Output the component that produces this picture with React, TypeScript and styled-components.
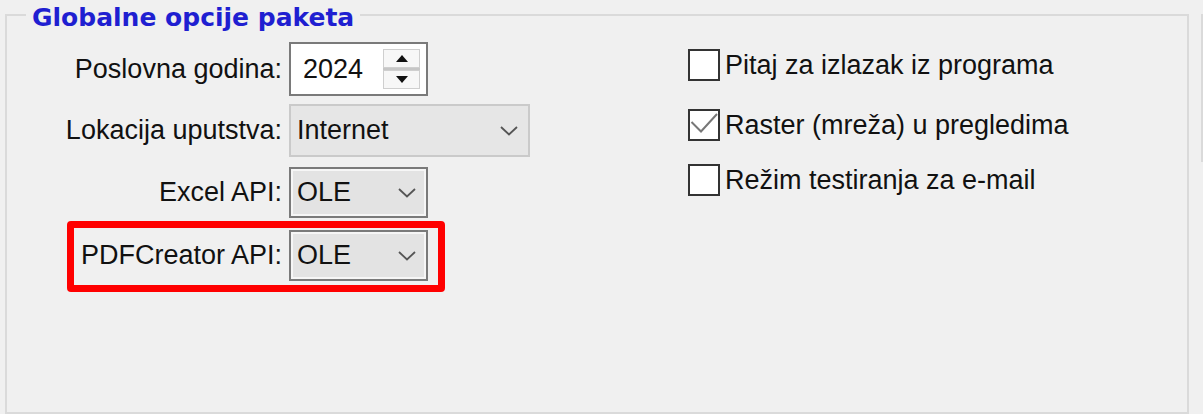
import React from 'react';
import styled, { createGlobalStyle } from 'styled-components';

const GlobalStyle = createGlobalStyle`
  html, body {
    margin: 0;
    padding: 0;
    background: #f0f0f0;
  }
  body {
    font-family: 'Liberation Sans', Arial, sans-serif;
    color: #111;
  }
`;

const Page = styled.div`
  display: flex;
  align-items: flex-start;
  width: 1203px;
  height: 414px;
  overflow: hidden;
  background: #f0f0f0;
`;

const GroupBox = styled.fieldset`
  box-sizing: border-box;
  flex: none;
  width: 1184px;
  height: 414px;
  margin: 0 0 0 5px;
  padding: 0;
  min-width: 0;
  border: 2px solid #dadada;
`;

const Title = styled.legend`
  margin-left: 19px;
  padding: 5px 6px 0;
  line-height: 25px;
  font-family: 'DejaVu Sans', Verdana, sans-serif;
  font-weight: bold;
  font-size: 25px;
  color: #1f1fd1;
`;

const Content = styled.div`
  display: flex;
  padding: 12px 0 0 53px;
`;

const FormColumn = styled.div`
  display: flex;
  flex-direction: column;
  width: 628px;
`;

const Row = styled.div<{ $top?: number }>`
  display: flex;
  align-items: center;
  gap: 7px;
  margin-top: ${({ $top }) => $top || 0}px;
`;

const Label = styled.span`
  width: 222px;
  text-align: right;
  white-space: nowrap;
  font-size: 27px;
`;

const SpinBox = styled.div`
  box-sizing: border-box;
  display: flex;
  align-items: center;
  width: 139px;
  height: 54px;
  padding: 4px 6px 4px 12px;
  background: #fff;
  border: 2px solid #7a7a7a;
  font-size: 27px;
  & > span {
    flex: 1;
  }
`;

const SpinButtons = styled.div`
  display: flex;
  flex-direction: column;
  width: 37px;
  height: 40px;
  gap: 2px;
  background: #c6c6c6;
`;

const SpinButton = styled.div`
  flex: 1;
  display: flex;
  align-items: center;
  justify-content: center;
  background: #f7f7f7;
  box-shadow: inset 0 0 0 1px #cfcfcf;
`;

const Combo = styled.div<{ $width: number; $height: number; $flat?: boolean }>`
  box-sizing: border-box;
  display: flex;
  align-items: center;
  width: ${({ $width }) => $width}px;
  height: ${({ $height }) => $height}px;
  padding: 0 10px 0 6px;
  font-size: 27px;
  background: ${({ $flat }) => ($flat ? '#e6e6e6' : '#e3e3e3')};
  border: 2px solid ${({ $flat }) => ($flat ? '#cacaca' : '#7a7a7a')};
  box-shadow: ${({ $flat }) => ($flat ? 'none' : 'inset 0 0 0 2px #f6f6f6')};
  & > svg {
    margin-left: auto;
  }
`;

const Highlight = styled.div`
  position: relative;
  align-self: flex-start;
  margin-top: 12px;
  &::after {
    content: '';
    position: absolute;
    inset: -9px -17px -11px 7px;
    border: 7px solid #ff0000;
    border-radius: 4px;
    pointer-events: none;
  }
`;

const CheckColumn = styled.div`
  display: flex;
  flex-direction: column;
`;

const CheckRow = styled.label<{ $top: number }>`
  display: flex;
  align-items: center;
  gap: 5px;
  margin-top: ${({ $top }) => $top}px;
  font-size: 27px;
  white-space: nowrap;
`;

const Box = styled.span`
  box-sizing: border-box;
  display: flex;
  align-items: center;
  justify-content: center;
  width: 32px;
  height: 32px;
  background: #fff;
  border: 2px solid #333;
`;

const SidePanel = styled.div`
  flex: none;
  width: 20px;
  height: 146px;
  margin: 14px 0 0 12px;
  border-left: 2px solid #dadada;
  border-top: 2px solid #dadada;
`;

const Chevron = () => (
  <svg width="18" height="10" viewBox="0 0 18 10">
    <path d="M1 1 L9 8.5 L17 1" fill="none" stroke="#555" strokeWidth="1.8" />
  </svg>
);

const Arrow = ({ up }: { up?: boolean }) => (
  <svg width="12" height="7" viewBox="0 0 12 7">
    <path d={up ? 'M0 7 L6 0 L12 7 Z' : 'M0 0 L6 7 L12 0 Z'} fill="#111" />
  </svg>
);

const Check = ({ checked }: { checked?: boolean }) => (
  <Box>
    {checked && (
      <svg width="28" height="28" viewBox="0 0 28 28">
        <path d="M1.5 11 L11 20.5 L27 3" fill="none" stroke="#777" strokeWidth="2" />
      </svg>
    )}
  </Box>
);

const options = [
  { text: 'Pitaj za izlazak iz programa', checked: false, top: 7 },
  { text: 'Raster (mreža) u pregledima', checked: true, top: 28 },
  { text: 'Režim testiranja za e-mail', checked: false, top: 23 },
];

const App = () => {
  return (
    <>
      <GlobalStyle />
      <Page>
        <GroupBox>
          <Title>Globalne opcije paketa</Title>
          <Content>
            <FormColumn>
              <Row>
                <Label>Poslovna godina:</Label>
                <SpinBox>
                  <span>2024</span>
                  <SpinButtons>
                    <SpinButton><Arrow up /></SpinButton>
                    <SpinButton><Arrow /></SpinButton>
                  </SpinButtons>
                </SpinBox>
              </Row>
              <Row $top={8}>
                <Label>Lokacija uputstva:</Label>
                <Combo $width={241} $height={53} $flat>
                  Internet
                  <Chevron />
                </Combo>
              </Row>
              <Row $top={10}>
                <Label>Excel API:</Label>
                <Combo $width={139} $height={51}>
                  OLE
                  <Chevron />
                </Combo>
              </Row>
              <Highlight>
                <Row>
                  <Label>PDFCreator API:</Label>
                  <Combo $width={139} $height={51}>
                    OLE
                    <Chevron />
                  </Combo>
                </Row>
              </Highlight>
            </FormColumn>
            <CheckColumn>
              {options.map((o) => (
                <CheckRow key={o.text} $top={o.top}>
                  <Check checked={o.checked} />
                  {o.text}
                </CheckRow>
              ))}
            </CheckColumn>
          </Content>
        </GroupBox>
        <SidePanel />
      </Page>
    </>
  );
};

export default App;
